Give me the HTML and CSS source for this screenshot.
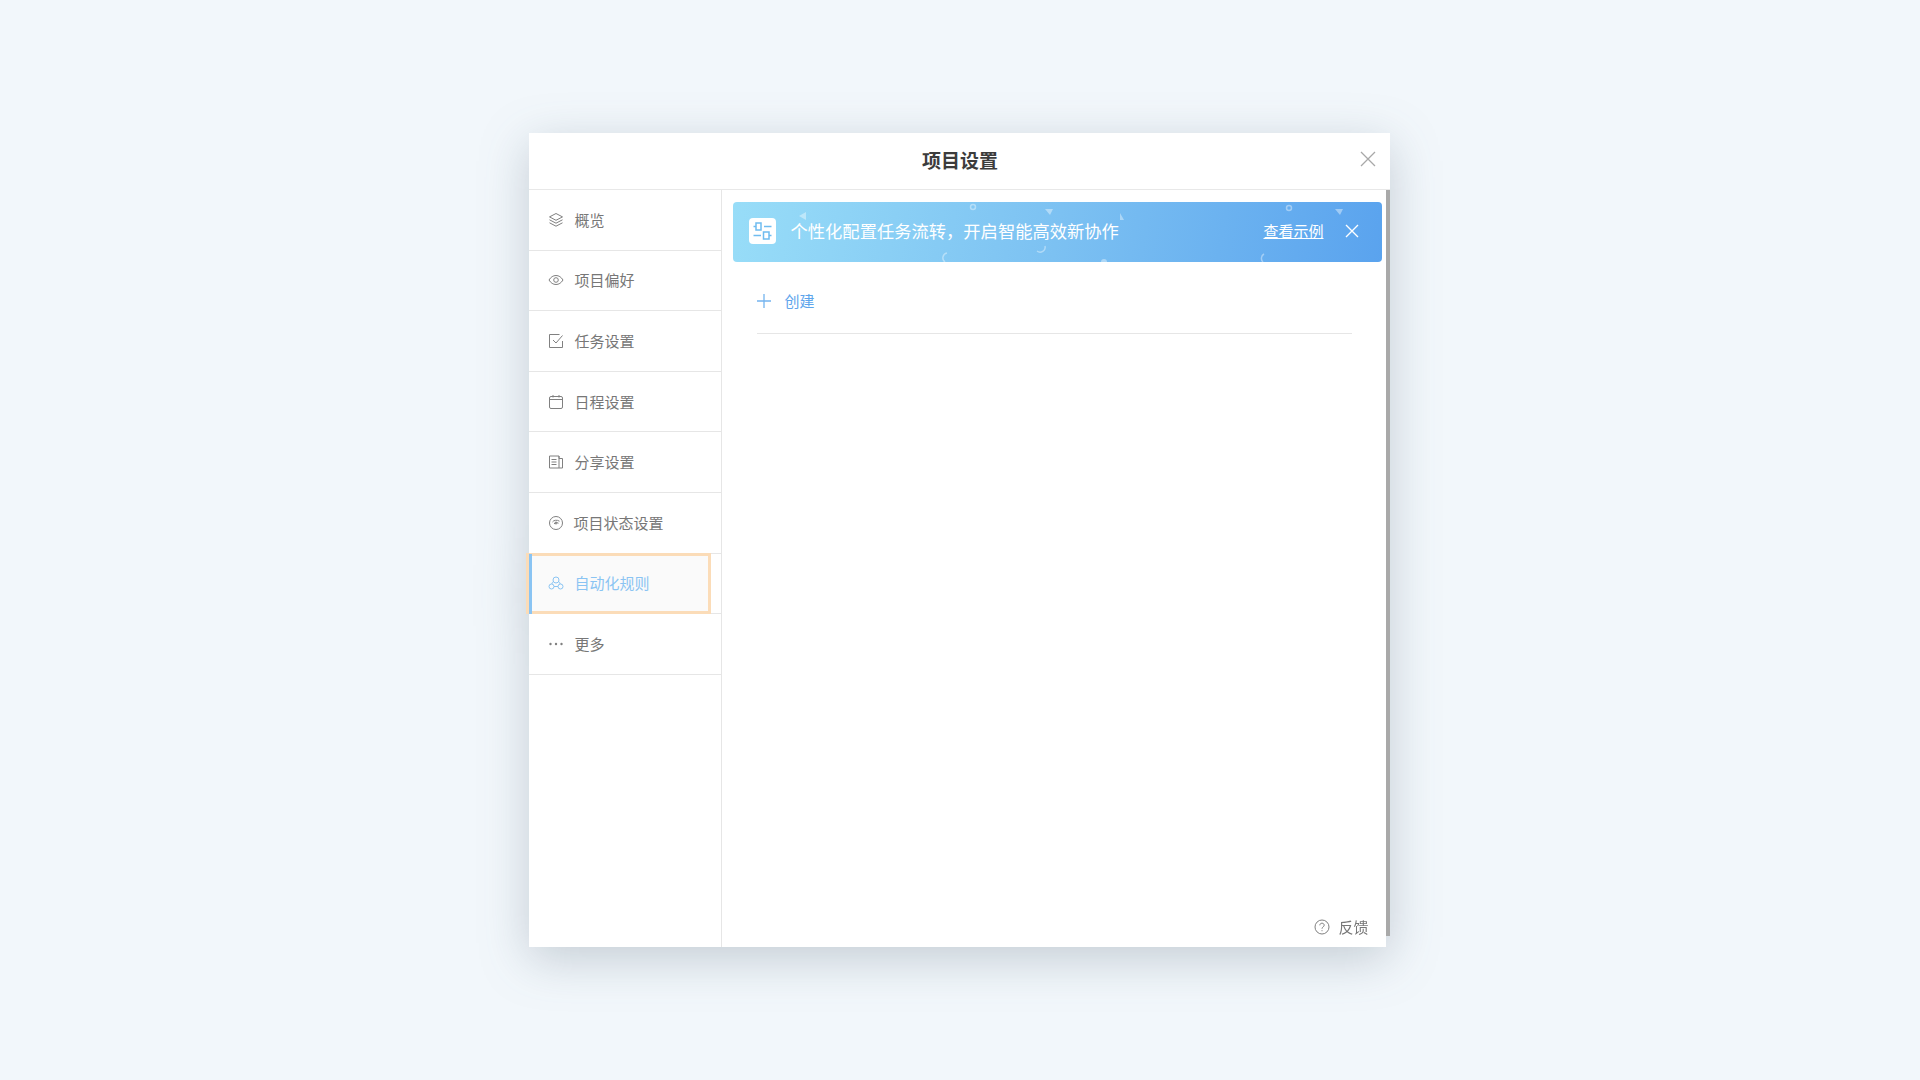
FILE: index.html
```html
<!DOCTYPE html>
<html lang="zh-CN">
<head>
    <meta charset="UTF-8">
    <title>项目设置</title>
    <link rel="stylesheet" href="styles.css">
</head>
<body>

    <div class="modal">
        <div class="modal-header">
            <h2>项目设置</h2>
            <svg class="modal-close" viewBox="0 0 16 16"><path d="M1 1l14 14M15 1L1 15"/></svg>
        </div>

        <div class="modal-body">
            <ul class="side-menu">
                <li class="menu-item">
                    <svg class="menu-icon" viewBox="0 0 16 16"><path d="M8 1.500l6.500 3.400L8 8.300 1.500 4.900zM1.500 7.800L8 11.200l6.500-3.400M1.500 10.800L8 14.200l6.500-3.400"/></svg>
                    <span>概览</span>
                </li>
                <li class="menu-item">
                    <svg class="menu-icon" viewBox="0 0 16 16"><path d="M1 8c1.800-3 4.200-4.500 7-4.500S13.200 5 15 8c-1.800 3-4.200 4.500-7 4.500S2.800 11 1 8z"/><circle cx="8" cy="8" r="2.300"/></svg>
                    <span>项目偏好</span>
                </li>
                <li class="menu-item">
                    <svg class="menu-icon" viewBox="0 0 16 16"><path d="M14.500 8v6.500h-13v-13h10M5 7l3 3 6.500-7.500"/></svg>
                    <span>任务设置</span>
                </li>
                <li class="menu-item">
                    <svg class="menu-icon" viewBox="0 0 16 16"><rect x="1.500" y="2.500" width="13" height="12" rx="1.500"/><path d="M1.500 5.500h13M5 1v2.500M11 1v2.500"/></svg>
                    <span>日程设置</span>
                </li>
                <li class="menu-item">
                    <svg class="menu-icon" viewBox="0 0 16 16"><path d="M11 2H1.500v12H14.500V4.500H11zM11 2v12M3.500 5.500h5M3.500 8h5M3.500 10.500h5"/></svg>
                    <span>分享设置</span>
                </li>
                <li class="menu-item">
                    <svg class="menu-icon" viewBox="0 0 16 16"><circle cx="8" cy="8" r="6.500"/><path d="M4.500 7c1-1.800 4.500-2.500 7-.8M6 9c1.200-1.500 3-1.600 4.500-.8"/><circle cx="8" cy="8" r="1"/></svg>
                    <span class="label-wide">项目状态设置</span>
                </li>
                <li class="menu-item active">
                    <svg class="menu-icon" viewBox="0 0 16 16"><circle cx="8" cy="5" r="3"/><circle cx="3.500" cy="11.500" r="2.500"/><circle cx="12.500" cy="11.500" r="2.500"/><path d="M6 11.500h4M5.200 6.500C4.500 7.300 4 8 3.800 9M10.800 6.500c.7.800 1.200 1.500 1.400 2.500"/></svg>
                    <span>自动化规则</span>
                </li>
                <li class="menu-item">
                    <svg class="menu-icon dots" viewBox="0 0 16 16"><circle cx="2.500" cy="8" r="1.200"/><circle cx="8" cy="8" r="1.200"/><circle cx="13.500" cy="8" r="1.200"/></svg>
                    <span>更多</span>
                </li>
            </ul>

            <div class="content">
                <div class="banner">
                    <!-- little shapes scattered over the banner -->
                    <svg class="banner-bg" viewBox="0 0 649 60">
                        <path class="fill" d="M66 14l7-4v8z"/>
                        <circle cx="240" cy="5" r="2.500"/>
                        <path class="fill" d="M312 7h8l-3 6z"/>
                        <path d="M312 44a5 5 0 0 1-8 5"/>
                        <path d="M214 51a5 5 0 0 0-2 9"/>
                        <circle class="fill" cx="371" cy="60" r="3"/>
                        <circle cx="556" cy="6" r="2.500"/>
                        <path class="fill" d="M602 7h8l-3 6z"/>
                        <path d="M531 52a5 5 0 0 0-1 8"/>
                        <path class="fill" d="M387 11l4 7h-4z"/>
                    </svg>
                    <div class="banner-icon">
                        <svg viewBox="0 0 26 26"><path d="M4 8.500h2.500M14.500 8.500H22M4 17.500h7.500M19.500 17.500H22"/><rect x="6.500" y="5" width="5" height="7"/><rect x="14" y="14" width="5.500" height="7"/></svg>
                    </div>
                    <span class="banner-text">个性化配置任务流转，开启智能高效新协作</span>
                    <a class="banner-link">查看示例</a>
                    <svg class="banner-close" viewBox="0 0 14 14"><path d="M1 1l12 12M13 1L1 13"/></svg>
                </div>

                <div class="create-row">
                    <svg class="plus" viewBox="0 0 14 14"><path d="M7 0v14M0 7h14"/></svg>
                    <span>创建</span>
                </div>

                <div class="feedback">
                    <svg class="help" viewBox="0 0 16 16"><circle cx="8" cy="8" r="7"/><path d="M5.800 6.300C5.800 5 6.800 4.200 8 4.200s2.200.8 2.200 2c0 1.700-2.200 1.700-2.200 3.500M8 11.200v1"/></svg>
                    <span>反馈</span>
                </div>
            </div>

            <div class="scrollbar"></div>
        </div>
    </div>

</body>
</html>
```

FILE: styles.css
```css
*, *::before, *::after {
    box-sizing: border-box;
}
html, body {
    height: 100%;
}
body {
    margin: 0;
    display: flex;
    align-items: center;
    justify-content: center;
    background-color: #f2f7fb;
    font-family: "Noto Sans CJK SC", "Noto Sans", sans-serif;
    overflow: hidden;
}
.modal {
    width: 861px;
    height: 814px;
    margin-right: 2px;
    display: flex;
    flex-direction: column;
    filter: drop-shadow(0 12px 24px rgba(60, 80, 100, 0.25));
}
.modal-header {
    height: 57px;
    flex-shrink: 0;
    display: flex;
    align-items: center;
    justify-content: center;
    padding-bottom: 3px;
    padding-left: 2px;
    position: relative;
    background-color: #fff;
    border-bottom: 1px solid #e8e8e8;
}
h2 {
    margin: 0;
    font-size: 19px;
    font-weight: 700;
    color: #3c3c3c;
}
.modal-close {
    position: absolute;
    top: 18px;
    right: 14px;
    width: 16px;
    height: 16px;
    fill: none;
    stroke: #a8a8a8;
    stroke-width: 1.3;
}
.modal-body {
    flex: 1;
    display: flex;
    align-items: flex-start;
    min-height: 0;
}
.side-menu {
    width: 193px;
    height: 100%;
    flex-shrink: 0;
    margin: 0;
    padding: 0;
    list-style: none;
    background-color: #fff;
    border-right: 1px solid #e6e6e6;
}
.menu-item {
    height: 60.6px;
    display: flex;
    align-items: center;
    gap: 11px;
    padding-left: 19px;
    position: relative;
    font-size: 15px;
    color: #777;
    border-bottom: 1px solid #e6e6e6;
}
.menu-item span {
    padding-bottom: 1px;
}
.menu-icon {
    width: 16px;
    height: 16px;
    flex-shrink: 0;
    fill: none;
    stroke: #808080;
    stroke-width: 1;
}
.menu-icon.dots {
    fill: #808080;
    stroke: none;
}
.label-wide {
    margin-left: -1px;
}
.menu-item.active {
    color: #8ac4f3;
    background: linear-gradient(to right, #fafafa 179px, #fff 179px);
}
.menu-item.active .menu-icon {
    stroke: #8ac4f3;
}
/* orange focus ring, sits a little outside the row on the left */
.menu-item.active::after {
    content: "";
    position: absolute;
    top: -1px;
    left: -3px;
    width: 185px;
    height: 61px;
    border: 3px solid #fbdcb8;
}
.menu-item.active::before {
    content: "";
    position: absolute;
    top: 0;
    left: 0;
    width: 3px;
    height: 60px;
    background-color: #8ac4f3;
    z-index: 1;
}
.content {
    flex: 1;
    height: 100%;
    display: flex;
    flex-direction: column;
    padding: 12px 4px 0 11px;
    background-color: #fff;
}
.banner {
    height: 60px;
    flex-shrink: 0;
    display: flex;
    align-items: center;
    position: relative;
    padding: 0 23px 2px 16px;
    border-radius: 4px;
    color: #fff;
    background: linear-gradient(100deg, #98ddf8 0%, #7cc1f2 50%, #5aa3ee 100%);
    overflow: hidden;
}
.banner-bg {
    position: absolute;
    top: 0;
    left: 0;
    width: 649px;
    height: 60px;
    fill: none;
    stroke: rgba(255, 255, 255, 0.4);
    stroke-width: 1.5;
}
.banner-bg .fill {
    fill: rgba(255, 255, 255, 0.4);
    stroke: none;
}
.banner-icon {
    width: 27px;
    height: 26px;
    flex-shrink: 0;
    position: relative;
    border-radius: 4px;
    background-color: #fff;
}
.banner-icon svg {
    display: block;
    width: 100%;
    height: 100%;
    fill: none;
    stroke: #6fbcf0;
    stroke-width: 1.5;
}
.banner-text {
    margin-left: 15px;
    padding-bottom: 2px;
    font-size: 17.3px;
    position: relative;
    white-space: nowrap;
}
.banner-link {
    margin-left: auto;
    padding-bottom: 2px;
    font-size: 15px;
    color: #fff;
    text-decoration: underline;
    position: relative;
}
.banner-close {
    width: 14px;
    height: 14px;
    margin-left: 21px;
    position: relative;
    fill: none;
    stroke: #fff;
    stroke-width: 1.4;
}
.create-row {
    height: 72px;
    margin: 0 30px 0 24px;
    flex-shrink: 0;
    display: flex;
    align-items: center;
    gap: 14px;
    padding-top: 7px;
    font-size: 15px;
    color: #5ea5ec;
    border-bottom: 1px solid #e6e6e6;
}
.create-row span {
    padding-bottom: 1px;
}
.plus {
    width: 14px;
    height: 14px;
    fill: none;
    stroke: #74b4ef;
    stroke-width: 1.3;
}
.feedback {
    margin-top: auto;
    margin-bottom: 10px;
    margin-right: 13px;
    align-self: flex-end;
    display: flex;
    align-items: center;
    gap: 8px;
    font-size: 15px;
    color: #777;
}
.help {
    width: 16px;
    height: 16px;
    fill: none;
    stroke: #808080;
    stroke-width: 1;
}
.scrollbar {
    width: 4px;
    height: 746px;
    flex-shrink: 0;
    background-color: #a9a9a9;
}
```
